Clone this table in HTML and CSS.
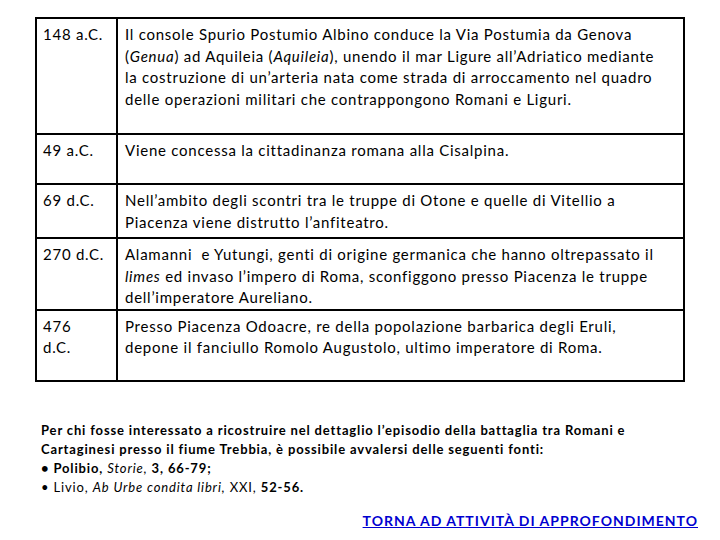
FILE: index.html
```html
<!DOCTYPE html>
<html lang="it">
<head>
<meta charset="utf-8">
<title>Cronologia</title>
<link rel="stylesheet" href="styles.css">
</head>
<body>
<div class="page">
  <table class="timeline">
    <tr class="r1">
      <td class="date">148 a.C.</td>
      <td class="event">Il console Spurio Postumio Albino conduce la Via Postumia da Genova<br>(<i>Genua</i>) ad Aquileia (<i>Aquileia</i>), unendo il mar Ligure all’Adriatico mediante<br>la costruzione di un’arteria nata come strada di arroccamento nel quadro<br>delle operazioni militari che contrappongono Romani e Liguri.</td>
    </tr>
    <tr class="r2">
      <td class="date">49 a.C.</td>
      <td class="event">Viene concessa la cittadinanza romana alla Cisalpina.</td>
    </tr>
    <tr class="r3">
      <td class="date">69 d.C.</td>
      <td class="event">Nell’ambito degli scontri tra le truppe di Otone e quelle di Vitellio a<br>Piacenza viene distrutto l’anfiteatro.</td>
    </tr>
    <tr class="r4">
      <td class="date">270 d.C.</td>
      <td class="event">Alamanni&nbsp; e Yutungi, genti di origine germanica che hanno oltrepassato il<br><i>limes</i> ed invaso l’impero di Roma, sconfiggono presso Piacenza le truppe<br>dell’imperatore Aureliano.</td>
    </tr>
    <tr class="r5">
      <td class="date">476<br>d.C.</td>
      <td class="event">Presso Piacenza Odoacre, re della popolazione barbarica degli Eruli,<br>depone il fanciullo Romolo Augustolo, ultimo imperatore di Roma.</td>
    </tr>
  </table>

  <div class="sources">
    <p class="intro">Per chi fosse interessato a ricostruire nel dettaglio l’episodio della battaglia tra Romani e<br>Cartaginesi presso il fiume Trebbia, è possibile avvalersi delle seguenti fonti:</p>
    <p class="item"><b>• Polibio,</b> <i>Storie,</i> <b>3, 66-79;</b></p>
    <p class="item">• Livio, <i>Ab Urbe condita libri,</i> XXI, <b>52-56.</b></p>
  </div>

  <div class="back">
    <a class="back-link" href="#">TORNA AD ATTIVITÀ DI APPROFONDIMENTO</a>
  </div>
</div>
</body>
</html>
```

FILE: styles.css
```css
html, body {
  margin: 0;
  padding: 0;
  background: #ffffff;
}

.page {
  width: 720px;
  height: 540px;
  padding-top: 17px;
  box-sizing: border-box;
  font-family: Lato, "Open Sans", sans-serif;
  color: #000;
}

.timeline {
  margin-left: 35px;
  width: 650px;
  border-collapse: collapse;
  border: 2px solid #000;
  font-size: 15px;
  line-height: 21.5px;
  letter-spacing: 0.75px;
}

.timeline td {
  border: 2px solid #000;
  vertical-align: top;
  padding: 5px 0 0 7px;
}

.timeline td.date {
  width: 73px;
  padding-left: 6px;
}

.timeline td.event {
  padding-left: 7px;
  white-space: nowrap;
}

.r1 { height: 116px; }
.r2 { height: 50px; }
.r3 { height: 54px; }
.r4 { height: 71px; }
.r5 { height: 71px; }

.sources {
  margin: 39px 0 0 41px;
  font-size: 13px;
  line-height: 19px;
  letter-spacing: 0.85px;
}

.sources p {
  margin: 0;
}

.intro {
  font-weight: 700;
}

.sources i {
  font-weight: 400;
}

.back {
  display: flex;
  justify-content: flex-end;
  padding-right: 22px;
  margin-top: 14px;
}

.back-link {
  color: #0000d0;
  font-weight: 700;
  font-size: 14px;
  line-height: 19px;
  letter-spacing: 1px;
  text-decoration: underline;
}
```
